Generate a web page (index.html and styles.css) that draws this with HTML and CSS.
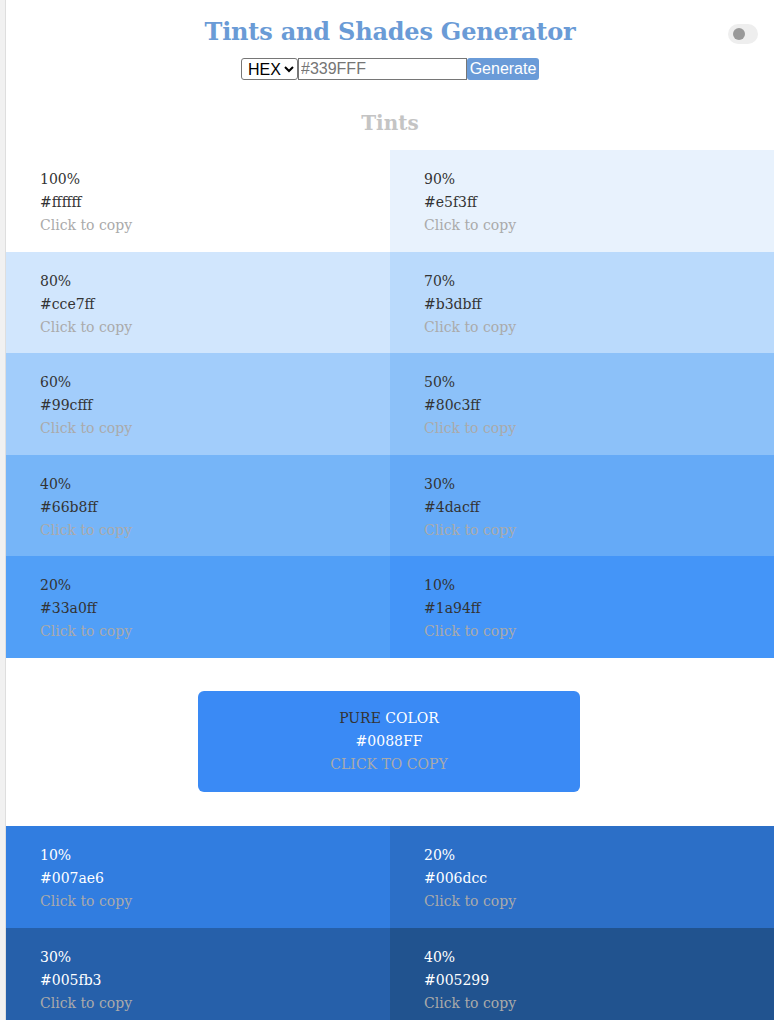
FILE: index.html
```html
<!DOCTYPE html>
<html>
<head>
<meta charset="utf-8">
<link rel="stylesheet" href="styles.css">
</head>
<body>
<div class="rail"></div>
<div class="page">
  <header class="header">
    <h1 class="title">Tints and Shades Generator</h1>
    <div class="toggle"><span class="knob"></span></div>
    <form class="controls">
      <select class="mode"><option>HEX</option></select><input class="hex" type="text" placeholder="#339FFF"><button class="gen" type="button">Generate</button>
    </form>
  </header>
  <h2 class="section">Tints</h2>
  <div class="grid">
    <div class="tile dark" style="background:#ffffff"><span>100%</span><span>#ffffff</span><span class="copy">Click to copy</span></div>
    <div class="tile dark" style="background:#e8f2fd"><span>90%</span><span>#e5f3ff</span><span class="copy">Click to copy</span></div>
    <div class="tile dark" style="background:#d1e6fd"><span>80%</span><span>#cce7ff</span><span class="copy">Click to copy</span></div>
    <div class="tile dark" style="background:#badafc"><span>70%</span><span>#b3dbff</span><span class="copy">Click to copy</span></div>
    <div class="tile dark" style="background:#a2cdfb"><span>60%</span><span>#99cfff</span><span class="copy">Click to copy</span></div>
    <div class="tile dark" style="background:#8cc1f9"><span>50%</span><span>#80c3ff</span><span class="copy">Click to copy</span></div>
    <div class="tile dark" style="background:#76b5f8"><span>40%</span><span>#66b8ff</span><span class="copy">Click to copy</span></div>
    <div class="tile dark" style="background:#65aaf7"><span>30%</span><span>#4dacff</span><span class="copy">Click to copy</span></div>
    <div class="tile dark" style="background:#519ff7"><span>20%</span><span>#33a0ff</span><span class="copy">Click to copy</span></div>
    <div class="tile dark" style="background:#4495f8"><span>10%</span><span>#1a94ff</span><span class="copy">Click to copy</span></div>
  </div>
  <div class="pure-wrap">
    <div class="pure">
      <span><span class="pure-word">PURE</span> COLOR</span>
      <span>#0088FF</span>
      <span class="copy">CLICK TO COPY</span>
    </div>
  </div>
  <div class="grid">
    <div class="tile light" style="background:#317de0"><span>10%</span><span>#007ae6</span><span class="copy">Click to copy</span></div>
    <div class="tile light" style="background:#2c6fc7"><span>20%</span><span>#006dcc</span><span class="copy">Click to copy</span></div>
    <div class="tile light" style="background:#2660aa"><span>30%</span><span>#005fb3</span><span class="copy">Click to copy</span></div>
    <div class="tile light" style="background:#21538f"><span>40%</span><span>#005299</span><span class="copy">Click to copy</span></div>
  </div>
</div>
</body>
</html>
```

FILE: styles.css
```css
html, body {
  margin: 0;
  padding: 0;
  background: #ffffff;
}
body {
  display: flex;
  min-height: 100vh;
  font-family: "DejaVu Serif", "Liberation Serif", serif;
}
.rail {
  width: 5px;
  flex: 0 0 5px;
  background: #f1f1f1;
  border-right: 1px solid #dedede;
}
.page {
  flex: 1;
  min-width: 0;
}
.header {
  position: relative;
  display: flex;
  flex-direction: column;
  align-items: center;
  padding-top: 15px;
}
.title {
  margin: 0;
  font-size: 24px;
  line-height: 33px;
  font-weight: bold;
  color: #6a9bd6;
  letter-spacing: -0.2px;
}
.toggle {
  position: absolute;
  top: 24px;
  right: 16px;
  width: 30px;
  height: 20px;
  border-radius: 10px;
  background: #eeeeee;
  display: flex;
  align-items: center;
  padding-left: 5px;
  box-sizing: border-box;
}
.knob {
  width: 12px;
  height: 12px;
  border-radius: 50%;
  background: #999999;
}
.controls {
  display: flex;
  align-items: stretch;
  margin-top: 10px;
  height: 22px;
}
.mode {
  font-family: "Liberation Sans", Arial, sans-serif;
  font-size: 16px;
  width: 57px;
  height: 22px;
  border: 1px solid #767676;
  border-radius: 3px;
  background: #fff;
  color: #000;
  padding: 0 0 0 2px;
  box-sizing: border-box;
}
.hex {
  font-family: "Liberation Sans", Arial, sans-serif;
  font-size: 16px;
  width: 169px;
  height: 22px;
  border: 1px solid #767676;
  box-sizing: border-box;
  padding: 0 2px;
  margin: 0;
}
.hex::placeholder {
  color: #757575;
}
.gen {
  font-family: "Liberation Sans", Arial, sans-serif;
  font-size: 16px;
  width: 72px;
  height: 22px;
  border: none;
  border-radius: 3px;
  background: #6a9bd8;
  color: #fff;
  padding: 0;
  margin: 0;
}
.section {
  margin: 29px 0 13px;
  text-align: center;
  font-size: 20px;
  line-height: 28px;
  font-weight: bold;
  color: #c4c4c4;
}
.grid {
  display: grid;
  grid-template-columns: 1fr 1fr;
}
.tile {
  height: 101.6px;
  box-sizing: border-box;
  padding: 18px 34px 0;
  display: flex;
  flex-direction: column;
  font-size: 14px;
  line-height: 23px;
}
.tile.dark { color: #333333; }
.tile.light { color: #ffffff; }
.copy { color: #aaaaaa; }
.pure-wrap {
  display: flex;
  justify-content: center;
  padding: 33px 0 34px;
}
.pure {
  width: 382px;
  height: 101px;
  margin-left: -2px;
  border-radius: 6px;
  background: #3a8af5;
  color: #fff;
  display: flex;
  flex-direction: column;
  align-items: center;
  justify-content: center;
  font-size: 14px;
  line-height: 23px;
}
.pure-word { color: #333333; }
```
